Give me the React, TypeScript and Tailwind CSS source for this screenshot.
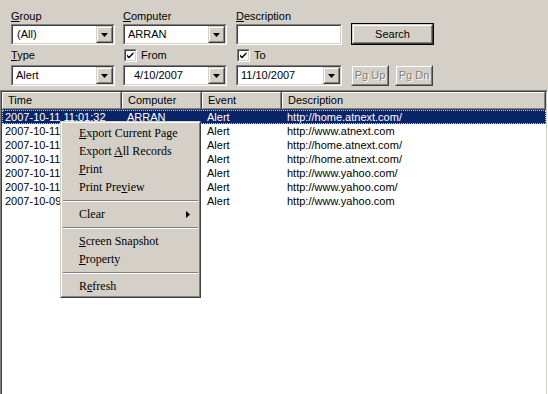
import type { ReactNode } from "react";

const ui = "font-['Liberation_Sans',Arial,sans-serif] text-[11px]";

function Sunken({ className = "", children }: { className?: string; children?: ReactNode }) {
  return (
    <div className={`border border-t-[#808080] border-l-[#808080] border-b-white border-r-white ${className}`}>
      <div className="h-full w-full border border-t-[#404040] border-l-[#404040] border-b-[#d4d0c8] border-r-[#d4d0c8] bg-white">
        {children}
      </div>
    </div>
  );
}

function Raised({ className = "", children }: { className?: string; children?: ReactNode }) {
  return (
    <div className={`border border-t-[#d4d0c8] border-l-[#d4d0c8] border-b-[#404040] border-r-[#404040] bg-[#d4d0c8] ${className}`}>
      <div className="flex h-full w-full items-center justify-center border border-t-white border-l-white border-b-[#808080] border-r-[#808080]">
        {children}
      </div>
    </div>
  );
}

function Combo({ value, width, indent = "pl-[3px]" }: { value: string; width: string; indent?: string }) {
  return (
    <Sunken className={`h-[21px] ${width}`}>
      <div className="flex h-full items-center">
        <span className={`flex-1 truncate ${indent}`}>{value}</span>
        <Raised className="h-[17px] w-[17px]">
          <svg width="7" height="4" viewBox="0 0 7 4">
            <path d="M0 0h7L3.5 4z" fill="#000" />
          </svg>
        </Raised>
      </div>
    </Sunken>
  );
}

function Label({ children }: { children: ReactNode }) {
  return <div className="flex h-[16px] items-center">{children}</div>;
}

function Check({ label }: { label: string }) {
  return (
    <div className="flex h-[20px] items-center gap-[4px] pl-[1px]">
      <Sunken className="h-[13px] w-[13px]">
        <svg width="9" height="9" viewBox="0 0 9 9" className="block">
          <path d="M1 3.5l2 2L7.5 1v2L3 7.5 1 5.5z" fill="#000" />
        </svg>
      </Sunken>
      <span>{label}</span>
    </div>
  );
}

const rows = [
  ["2007-10-11 11:01:32", "ARRAN", "Alert", "http://home.atnext.com/"],
  ["2007-10-11 10:58:14", "ARRAN", "Alert", "http://www.atnext.com"],
  ["2007-10-11 10:52:40", "ARRAN", "Alert", "http://home.atnext.com/"],
  ["2007-10-11 10:47:05", "ARRAN", "Alert", "http://home.atnext.com/"],
  ["2007-10-11 09:31:27", "ARRAN", "Alert", "http://www.yahoo.com/"],
  ["2007-10-11 09:30:56", "ARRAN", "Alert", "http://www.yahoo.com/"],
  ["2007-10-09 16:12:08", "ARRAN", "Alert", "http://www.yahoo.com"],
];

const cols = [
  { name: "Time", w: "w-[120px]" },
  { name: "Computer", w: "w-[80px]" },
  { name: "Event", w: "w-[80px]" },
  { name: "Description", w: "flex-1" },
];

type MenuItem = { pre: string; key: string; post: string; sub?: boolean } | "sep";

const menu: MenuItem[] = [
  { pre: "", key: "E", post: "xport Current Page" },
  { pre: "Export ", key: "A", post: "ll Records" },
  { pre: "", key: "P", post: "rint" },
  { pre: "Print Pre", key: "v", post: "iew" },
  "sep",
  { pre: "Clear", key: "", post: "", sub: true },
  "sep",
  { pre: "", key: "S", post: "creen Snapshot" },
  { pre: "", key: "P", post: "roperty" },
  "sep",
  { pre: "R", key: "e", post: "fresh" },
];

export default function App() {
  return (
    <div className={`relative h-[394px] w-[548px] overflow-hidden bg-[#d4d0c8] text-black ${ui}`}>
      <div className="flex gap-[8px] pl-[11px] pt-[8px]">
        <div className="w-[104px]">
          <Label><span><u>G</u>roup</span></Label>
          <Combo value="(All)" width="w-[104px]" indent="pl-[4px]" />
          <div className="flex h-[20px] items-center"><span><u>T</u>ype</span></div>
          <Combo value="Alert" width="w-[104px]" />
        </div>
        <div className="w-[104px]">
          <Label><span><u>C</u>omputer</span></Label>
          <Combo value="ARRAN" width="w-[104px]" />
          <Check label="From" />
          <Combo value="4/10/2007" width="w-[104px]" indent="pl-[9px]" />
        </div>
        <div className="ml-[1px] w-[106px]">
          <Label><span><u>D</u>escription</span></Label>
          <Sunken className="h-[21px] w-[106px]" />
          <Check label="To" />
          <Combo value="11/10/2007" width="w-[106px]" />
        </div>
        <div className="ml-[1px] w-[83px]">
          <div className="h-[16px]" />
          <div className="h-[22px] -mt-[1px] border border-black">
            <Raised className="h-full w-full">Search</Raised>
          </div>
          <div className="h-[20px]" />
          <div className="flex gap-[6px]">
            {["Pg Up", "Pg Dn"].map((t) => (
              <Raised key={t} className="h-[21px] w-[38px]">
                <span className="text-[#808080] [text-shadow:1px_1px_0_#fff]">{t}</span>
              </Raised>
            ))}
          </div>
        </div>
      </div>

      <div className="mt-[4px] h-[310px] border border-t-[#808080] border-l-[#808080] border-b-white border-r-white">
        <div className="h-full border border-t-[#404040] border-l-[#404040] border-b-[#d4d0c8] border-r-[#d4d0c8] bg-white">
          <div className="flex h-[18px] bg-[#d4d0c8]">
            {cols.map((c) => (
              <div key={c.name} className={`${c.w} border-b border-r border-b-[#404040] border-r-[#404040]`}>
                <div className="flex h-full items-center border border-t-white border-l-white border-b-[#808080] border-r-[#808080] pl-[5px]">
                  {c.name}
                </div>
              </div>
            ))}
          </div>
          {rows.map((r, i) => (
            <div
              key={i}
              className={`flex h-[14px] items-center ${i === 0 ? "border border-dotted border-[#c8c8c8] bg-[#0a246a] text-white" : "border border-transparent"}`}
            >
              <span className="w-[120px] truncate pl-[2px]">{r[0]}</span>
              <span className="w-[80px] pl-[4px]">{r[1]}</span>
              <span className="w-[80px] pl-[4px]">{r[2]}</span>
              <span className="flex-1 pl-[4px]">{r[3]}</span>
            </div>
          ))}
        </div>
      </div>

      <div className="absolute left-[60px] top-[121px] w-[141px] border border-t-[#d4d0c8] border-l-[#d4d0c8] border-b-[#404040] border-r-[#404040] bg-[#d4d0c8] font-['Liberation_Serif','Times_New_Roman',serif] text-[12px]">
        <div className="border border-t-white border-l-white border-b-[#808080] border-r-[#808080] py-[1px]">
          {menu.map((m, i) =>
            m === "sep" ? (
              <div key={i} className="flex h-[9px] items-center px-[1px]">
                <div className="h-[2px] w-full border-t border-b border-t-[#808080] border-b-white" />
              </div>
            ) : (
              <div key={i} className="relative flex h-[18px] items-center pl-[17px]">
                <span>
                  {m.pre}
                  {m.key && <u>{m.key}</u>}
                  {m.post}
                </span>
                {m.sub && (
                  <svg width="4" height="7" viewBox="0 0 4 7" className="absolute right-[9px] top-[6px]">
                    <path d="M0 0l4 3.5L0 7z" fill="#000" />
                  </svg>
                )}
              </div>
            ),
          )}
        </div>
      </div>
    </div>
  );
}
